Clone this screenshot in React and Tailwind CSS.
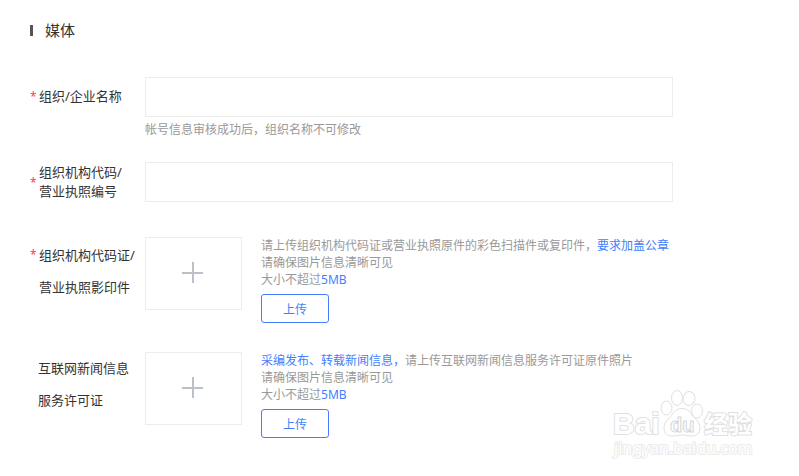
import React from "react";

function Label({ htmlFor, required, children, className = "" }) {
  return (
    <label htmlFor={htmlFor} className={`flex w-[115px] shrink-0 items-center text-[13px] text-[#333] ${className}`}>
      {required && <span className="w-[9px] shrink-0 font-['Open_Sans',sans-serif] text-xs leading-[inherit] text-[#ff2d3d]">*</span>}
      <span className="whitespace-nowrap">{children}</span>
    </label>
  );
}

function UploadBox({ label }) {
  return (
    <button
      type="button"
      aria-label={label}
      className="flex h-[73px] w-[97px] shrink-0 items-center justify-center border border-[#ececec] bg-white pr-0.5 pb-0.5"
    >
      <svg width="21" height="21" viewBox="0 0 21 21" aria-hidden="true">
        <path d="M0 11h21M11 0v21" stroke="#bcc1c9" strokeWidth="2" />
      </svg>
    </button>
  );
}

function UploadNotes({ id, children }) {
  return (
    <div className="ml-[19px] text-xs leading-[17px] text-[#999]">
      <p>{children}</p>
      <p>请确保图片信息清晰可见</p>
      <p>
        大小不超过<span className="text-[#447eff]">5MB</span>
      </p>
      <button
        type="button"
        id={id}
        className="mt-1.5 block h-[29px] w-[68px] rounded-[3px] border border-[#447eff] bg-white pt-0.5 text-xs text-[#447eff]"
      >
        上传
      </button>
    </div>
  );
}

function Watermark() {
  return (
    <svg
      className="pointer-events-none absolute right-[39px] bottom-4"
      width="152"
      height="72"
      viewBox="608 388 152 72"
      fill="#fff"
      stroke="#e0e0e0"
      strokeWidth="1"
      strokeLinejoin="round"
      aria-hidden="true"
    >
      <g paintOrder="stroke" strokeWidth="2">
        <text x="613" y="434" fontSize="30" fontWeight="700" className="font-['Liberation_Sans',sans-serif]">Bai</text>
        <text x="704" y="433" fontSize="24" fontWeight="700" className="font-['Noto_Sans_CJK_SC',sans-serif]">经验</text>
      </g>
      <ellipse cx="666.5" cy="408" rx="5.5" ry="7" />
      <ellipse cx="677" cy="398" rx="5.5" ry="7.5" />
      <ellipse cx="689" cy="398.5" rx="6" ry="7" transform="rotate(14 689 398.5)" />
      <ellipse cx="697" cy="411" rx="5.5" ry="7" />
      <path d="M682 408.500C677 408.500 674 411 672 415C670 418 664 421 664 428C664 433 667 436 672 436C676 436 679 435 682 435C686 435 688 436 692 436C697 436 700 433 700 428C700 421 694 418 692 415C690 411 687 408.500 682 408.500Z" />
      <text x="670" y="432" fontSize="20" stroke="#d6d6d6" fontWeight="700" className="font-['Liberation_Sans',sans-serif]">du</text>
      <text x="614" y="454" fontSize="16" fontWeight="400" paintOrder="stroke" strokeWidth="2" stroke="#ebebeb" className="font-['Noto_Sans',sans-serif]">
        jingyan.baidu.com
      </text>
    </svg>
  );
}

export default function App() {
  return (
    <main className="relative min-h-screen bg-white px-[30px] pt-5 pb-[38px] font-['Noto_Sans','Noto_Sans_CJK_SC',sans-serif]">
      <h1 className="flex h-5 items-center gap-3 text-[15px] leading-5 text-[#333]">
        <span className="h-[11px] w-[3px] bg-[#555]" />
        媒体
      </h1>

      <form className="mt-[37px]" onSubmit={(e) => e.preventDefault()}>
        <div className="flex items-start">
          <Label htmlFor="org-name" required className="h-10">组织/企业名称</Label>
          <div className="w-full max-w-[528px]">
            <input id="org-name" type="text" className="block h-10 w-full border border-[#ececec] px-3 text-[13px] outline-none" />
            <p className="mt-1 text-xs leading-[17px] text-[#999]">帐号信息审核成功后，组织名称不可修改</p>
          </div>
        </div>

        <div className="mt-6 flex items-center">
          <Label htmlFor="org-code" required className="leading-[19px]">
            组织机构代码/
            <br />
            营业执照编号
          </Label>
          <input id="org-code" type="text" className="block h-10 w-full max-w-[528px] border border-[#ececec] px-3 text-[13px] outline-none" />
        </div>

        <div className="mt-[35px] flex items-start">
          <Label htmlFor="cert-upload" required className="items-start! pt-0.5 leading-8">
            组织机构代码证/
            <br />
            营业执照影印件
          </Label>
          <UploadBox label="选择组织机构代码证图片" />
          <UploadNotes id="cert-upload">
            请上传组织机构代码证或营业执照原件的彩色扫描件或复印件，
            <a href="#seal" className="text-[#447eff]">要求加盖公章</a>
          </UploadNotes>
        </div>

        <div className="mt-[29px] flex items-start">
          <Label htmlFor="license-upload" className="pl-2 leading-8">
            互联网新闻信息
            <br />
            服务许可证
          </Label>
          <UploadBox label="选择服务许可证图片" />
          <UploadNotes id="license-upload">
            <a href="#news" className="text-[#447eff]">采编发布、转载新闻信息，</a>
            请上传互联网新闻信息服务许可证原件照片
          </UploadNotes>
        </div>
      </form>
      <Watermark />
    </main>
  );
}
